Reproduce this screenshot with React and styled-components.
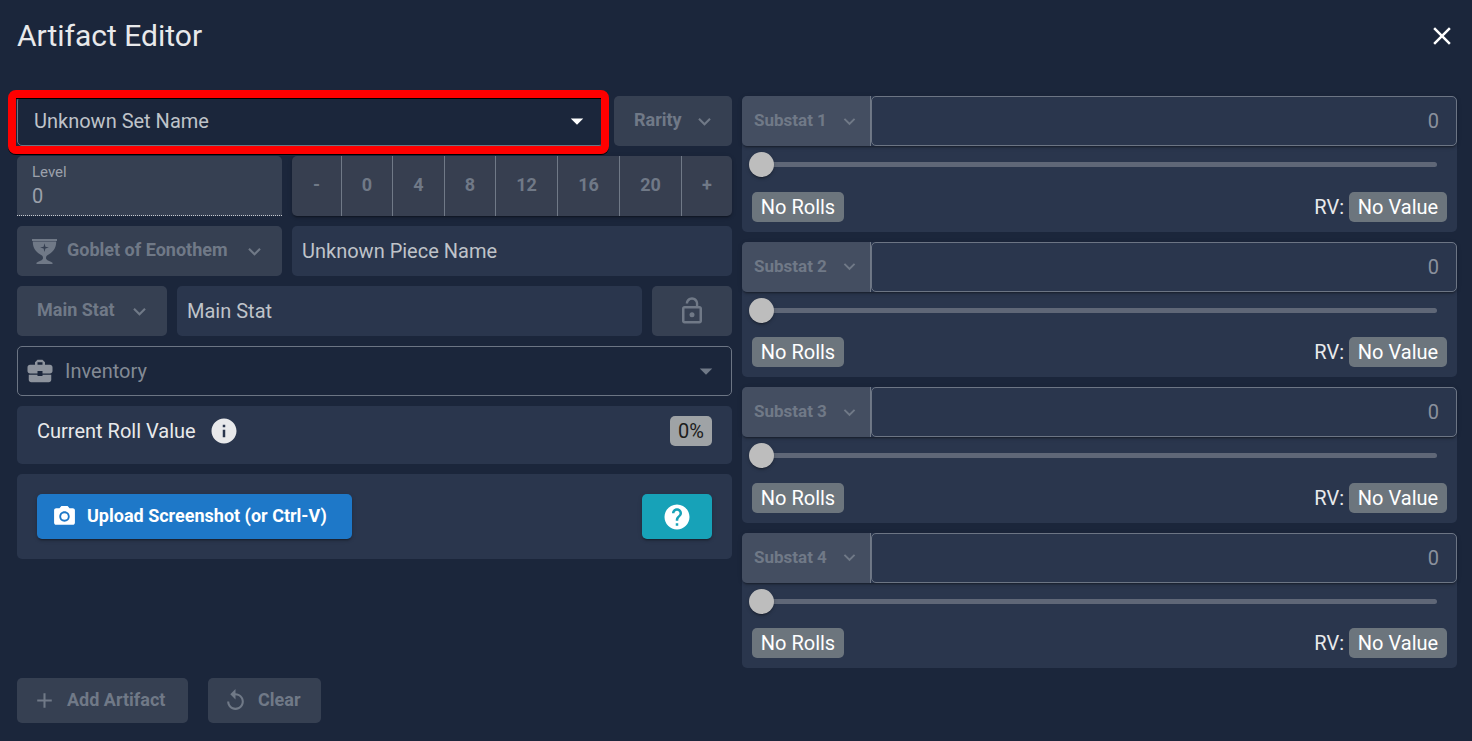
import React from 'react';
import styled, { createGlobalStyle, css } from 'styled-components';
import {
  MdAdd,
  MdArrowDropDown,
  MdBusinessCenter,
  MdClose,
  MdExpandMore,
  MdHelp,
  MdInfo,
  MdPhotoCamera,
  MdReplay,
} from 'react-icons/md';

const color = {
  page: '#1b263b',
  card: '#2a364d',
  disabledFill: 'rgba(255, 255, 255, 0.12)',
  disabledText: '#707987',
  outline: '#6c7584',
  text: '#e8e9eb',
  textSoft: '#bfc3c9',
};

const lift =
  '0 3px 1px -2px rgba(0,0,0,.2), 0 2px 2px rgba(0,0,0,.14), 0 1px 5px rgba(0,0,0,.12)';

const GlobalStyle = createGlobalStyle`
  * { box-sizing: border-box; }
  body {
    margin: 0;
    background: ${color.page};
    color: ${color.text};
    font-family: Roboto, "Liberation Sans", sans-serif;
    font-size: 20px;
    line-height: 30px;
  }
  button, input, select { font: inherit; color: inherit; margin: 0; }
  svg { display: block; flex: none; }
`;

const Page = styled.main`
  min-height: 100vh;
  padding: 16px 15px 18px 17px;
`;

const Header = styled.header`
  display: flex;
  align-items: center;
  justify-content: space-between;
  height: 40px;
  margin-bottom: 40px;
`;

const Title = styled.h1`
  margin: 0;
  font-size: 30px;
  line-height: 40px;
  font-weight: 400;
`;

const IconButton = styled.button`
  display: flex;
  padding: 0;
  border: 0;
  background: none;
  color: #fff;
`;

const Columns = styled.div`
  display: grid;
  grid-template-columns: minmax(0, 1fr) minmax(0, 1fr);
  gap: 10px;
`;

const Stack = styled.div`
  display: flex;
  flex-direction: column;
  gap: 10px;
`;

const SubstatStack = styled(Stack)`
  min-height: 572px;
`;

const Row = styled.div`
  display: flex;
  gap: 10px;
`;

const Button = styled.button`
  display: flex;
  align-items: center;
  justify-content: ${(p) => (p.$iconOnly ? 'center' : 'flex-start')};
  flex: none;
  gap: 10px;
  width: ${(p) => p.$width}px;
  height: ${(p) => p.$height || 50}px;
  padding: 0 15px 2px ${(p) => p.$start || 15}px;
  border: 0;
  border-radius: 5px;
  font-size: 18px;
  font-weight: 700;
  white-space: nowrap;
  color: #fff;
  background: ${(p) => p.$fill || color.disabledFill};
  box-shadow: ${(p) => (p.$fill ? lift : 'none')};
  &:disabled { color: ${color.disabledText}; }
  svg { margin-top: 2px; }
`;

const Chevron = styled(MdExpandMore)`
  margin-left: auto;
`;

const SetField = styled.div`
  position: relative;
  display: flex;
  flex: 1;
  align-items: center;
  min-width: 0;
  height: 50px;
  padding: 0 11px 0 16px;
  border: 1px solid ${color.outline};
  border-radius: 5px;
`;

const SetInput = styled.input`
  flex: 1;
  min-width: 0;
  padding: 0;
  border: 0;
  outline: 0;
  background: none;
  &::placeholder { color: ${color.textSoft}; opacity: 1; }
`;

const Highlight = styled.span`
  position: absolute;
  inset: -7px -6px -9px -10px;
  border: 8px solid #f00;
  border-radius: 8px;
  box-shadow: 0 1px 0 #000, inset 0 1px 0 #000;
  pointer-events: none;
`;

const LevelField = styled.label`
  display: flex;
  flex-direction: column;
  flex: none;
  width: 265px;
  height: 60px;
  padding: 5px 15px 0;
  border-bottom: 1px dotted #c6cad0;
  border-radius: 5px 5px 0 0;
  background: ${color.disabledFill};
  color: #9ca1ab;
`;

const LevelLabel = styled.span`
  font-size: 15px;
  line-height: 22px;
`;

const LevelInput = styled.input`
  width: 100%;
  height: 26px;
  padding: 0;
  border: 0;
  background: none;
`;

const LevelButtons = styled.div`
  display: grid;
  flex: 1;
  grid-template-columns: 50fr 51fr 52fr 51fr 62fr 62fr 62fr 50fr;
  height: 60px;
  border-radius: 5px;
  background: #373f50;
  box-shadow: ${lift};
`;

const LevelButton = styled.button`
  padding: 0 0 2px;
  border: 0;
  border-right: 1px solid ${color.disabledText};
  background: none;
  font-size: 18px;
  font-weight: 700;
  &:disabled { color: ${color.disabledText}; }
  &:last-child { border-right: 0; }
`;

const NameBox = styled.div`
  flex: 1;
  min-width: 0;
  height: 50px;
  padding: 10px;
  border-radius: 5px;
  background: ${color.card};
  color: ${color.textSoft};
`;

const InventoryField = styled.label`
  display: flex;
  align-items: center;
  gap: 10px;
  height: 50px;
  padding: 0 10px 0 7px;
  border: 1px solid ${color.outline};
  border-radius: 5px;
  color: #8d939d;
`;

const InventorySelect = styled.select`
  flex: 1;
  min-width: 0;
  padding: 0;
  border: 0;
  appearance: none;
  background: none;
  &:disabled { color: #838a95; opacity: 1; }
`;

const InventoryArrow = styled(MdArrowDropDown)`
  color: ${color.disabledText};
`;

const Card = styled.section`
  display: flex;
  align-items: center;
  justify-content: space-between;
  padding: ${(p) => p.$padding};
  border-radius: 5px;
  background: ${color.card};
`;

const RollLabel = styled.span`
  display: flex;
  align-items: center;
  gap: 13px;
`;

const Badge = styled.span`
  min-width: ${(p) => p.$width}px;
  height: 30px;
  border-radius: 5px;
  text-align: center;
  ${(p) =>
    p.$light
      ? css`background: #9fa3a6; color: #1c1c1c;`
      : css`background: #6c757d; color: #fff;`}
`;

const SubstatCard = styled.section`
  display: flex;
  flex: 1;
  flex-direction: column;
  padding-bottom: 10px;
  border-radius: 5px;
  background: ${color.card};
`;

const SubstatTop = styled.div`
  display: flex;
  height: 50px;
  border-radius: 5px;
  box-shadow: ${lift};
`;

const SubstatButton = styled(Button)`
  padding: 0 9px 2px 12px;
  border-right: 1px solid ${color.disabledText};
  border-radius: 5px 0 0 5px;
  background: #444e61;
  font-size: 17px;
`;

const SubstatInput = styled.input`
  flex: 1;
  min-width: 0;
  padding: 0 17px;
  border: 1px solid ${color.outline};
  border-radius: 5px;
  background: ${color.card};
  text-align: right;
  &:disabled { color: #8b919d; }
`;

const Slider = styled.input`
  display: block;
  height: 25px;
  &&& { margin: 6px 20px 0; }
  appearance: none;
  background: none;
  &::-webkit-slider-runnable-track {
    height: 5px;
    border-radius: 3px;
    background: #5f6777;
  }
  &::-webkit-slider-thumb {
    appearance: none;
    width: 25px;
    height: 25px;
    margin: -10px 0 0 -13px;
    border-radius: 50%;
    background: #bdbdbd;
    box-shadow: ${lift};
  }
`;

const SubstatFoot = styled.div`
  display: flex;
  justify-content: space-between;
  margin-top: auto;
  padding: 0 10px;
`;

const RollValue = styled.span`
  display: flex;
  gap: 5px;
`;

const Footer = styled.footer`
  display: flex;
  gap: 20px;
  margin-top: 10px;
`;

function GobletIcon() {
  return (
    <svg width="25" height="25" viewBox="0 0 25 25" fill="currentColor" aria-hidden="true">
      <path d="M0 0h25v2H0z" />
      <path
        fillRule="evenodd"
        d="M.8 2.500H24.200C24.400 9 21 13.300 15 16.500C14 17.300 13.800 18.500 14.200 20C15.500 22 18.500 22.300 20.500 23.800V25H4.500V23.800C6.500 22.300 9.500 22 10.800 20C11.200 18.500 11 17.300 10 16.500C4 13.300 .6 9 .8 2.500zM12.500 4.200l-.9 3.500-3.500.9 3.500.9.9 3.500.9-3.500 3.500-.9-3.500-.9z"
      />
    </svg>
  );
}

function LockOpenIcon() {
  return (
    <svg width="30" height="30" viewBox="0 0 24 24" fill="currentColor" aria-hidden="true">
      <circle cx="12" cy="15" r="2" />
      <path d="M18 8h-1V6c0-2.760-2.240-5-5-5S7 3.240 7 6h1.900c0-1.710 1.390-3.100 3.100-3.100s3.100 1.390 3.100 3.100v2H6c-1.100 0-2 .9-2 2v10c0 1.100.9 2 2 2h12c1.100 0 2-.9 2-2V10c0-1.100-.9-2-2-2zm0 12H6V10h12v10z" />
    </svg>
  );
}

const levels = ['-', '0', '4', '8', '12', '16', '20', '+'];

function Substat({ index }) {
  const name = `Substat ${index}`;
  return (
    <SubstatCard>
      <SubstatTop>
        <SubstatButton type="button" disabled $width={129}>
          {name}
          <Chevron size={23} />
        </SubstatButton>
        <SubstatInput disabled defaultValue="0" aria-label={`${name} value`} />
      </SubstatTop>
      <Slider type="range" min="0" max="6" defaultValue="0" disabled aria-label={`${name} rolls`} />
      <SubstatFoot>
        <Badge $width={92}>No Rolls</Badge>
        <RollValue>
          RV: <Badge $width={98}>No Value</Badge>
        </RollValue>
      </SubstatFoot>
    </SubstatCard>
  );
}

export default function App() {
  return (
    <>
      <GlobalStyle />
      <Page>
        <Header>
          <Title>Artifact Editor</Title>
          <IconButton type="button" aria-label="Close">
            <MdClose size={30} />
          </IconButton>
        </Header>
        <Columns>
          <Stack>
            <Row>
              <SetField>
                <SetInput placeholder="Unknown Set Name" aria-label="Artifact set" />
                <IconButton type="button" aria-label="Open set list">
                  <MdArrowDropDown size={30} />
                </IconButton>
                <Highlight />
              </SetField>
              <Button type="button" disabled $width={118} $start={20}>
                Rarity
                <Chevron size={25} />
              </Button>
            </Row>
            <Row>
              <LevelField>
                <LevelLabel>Level</LevelLabel>
                <LevelInput disabled defaultValue="0" />
              </LevelField>
              <LevelButtons>
                {levels.map((level) => (
                  <LevelButton key={level} type="button" disabled>
                    {level}
                  </LevelButton>
                ))}
              </LevelButtons>
            </Row>
            <Row>
              <Button type="button" disabled $width={265}>
                <GobletIcon />
                Goblet of Eonothem
                <Chevron size={25} />
              </Button>
              <NameBox>Unknown Piece Name</NameBox>
            </Row>
            <Row>
              <Button type="button" disabled $width={150} $start={20}>
                Main Stat
                <Chevron size={25} />
              </Button>
              <NameBox>Main Stat</NameBox>
              <Button type="button" disabled $iconOnly $width={80} aria-label="Lock">
                <LockOpenIcon />
              </Button>
            </Row>
            <InventoryField>
              <MdBusinessCenter size={30} />
              <InventorySelect disabled aria-label="Location">
                <option>Inventory</option>
              </InventorySelect>
              <InventoryArrow size={30} />
            </InventoryField>
            <Card $padding="10px 20px 18px">
              <RollLabel>
                Current Roll Value
                <MdInfo size={30} />
              </RollLabel>
              <Badge $light $width={42}>0%</Badge>
            </Card>
            <Card $padding="20px">
              <Button type="button" $width={315} $height={45} $fill="#1e78c8">
                <MdPhotoCamera size={25} />
                Upload Screenshot (or Ctrl-V)
              </Button>
              <Button type="button" $iconOnly $width={70} $height={45} $fill="#17a2b8" aria-label="Help">
                <MdHelp size={30} />
              </Button>
            </Card>
          </Stack>
          <SubstatStack>
            {[1, 2, 3, 4].map((index) => (
              <Substat key={index} index={index} />
            ))}
          </SubstatStack>
        </Columns>
        <Footer>
          <Button type="button" disabled $width={171} $height={45}>
            <MdAdd size={25} />
            Add Artifact
          </Button>
          <Button type="button" disabled $width={113} $height={45}>
            <MdReplay size={25} />
            Clear
          </Button>
        </Footer>
      </Page>
    </>
  );
}
